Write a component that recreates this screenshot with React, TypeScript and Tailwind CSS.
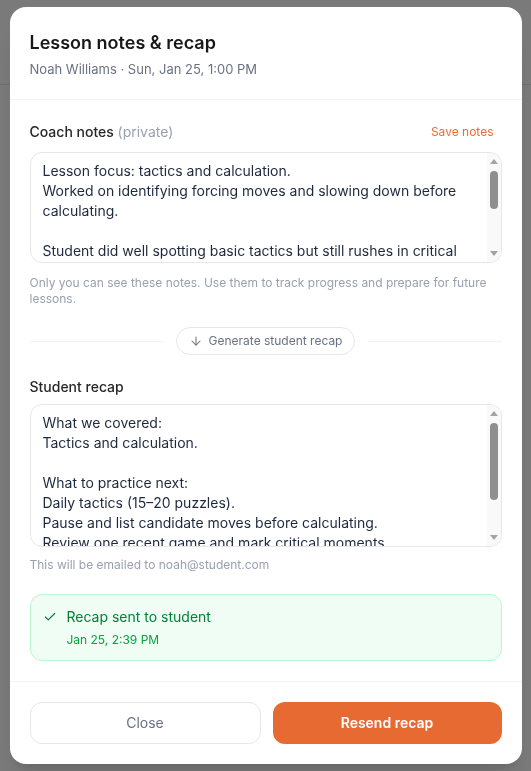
import { ArrowDown, Check } from 'lucide-react'

const coachNotes = `Lesson focus: tactics and calculation.
Worked on identifying forcing moves and slowing down before calculating.

Student did well spotting basic tactics but still rushes in critical positions and misses quiet defensive moves.

Homework:
- 15–20 tactics puzzles per day
- Review one recent game
- Write down candidate moves before each calculation

Next lesson: endgame basics.`

const studentRecap = `What we covered:
Tactics and calculation.

What to practice next:
Daily tactics (15–20 puzzles).
Pause and list candidate moves before calculating.
Review one recent game and mark critical moments.

Next lesson:
Endgame basics and king activity.`

// The page behind the dialog, only its edges show through the overlay
function BackgroundPage() {
  return (
    <div className="min-h-screen bg-white">
      <div className="h-[85px] border-b border-gray-200 flex items-center justify-end px-6">
        <span className="w-2 h-2 rounded-full bg-green-500" />
      </div>
      <div className="px-4 pt-[65px] flex flex-col gap-2">
        {[0, 1, 2, 3, 4, 5].map((i) => (
          <div key={i} className="h-[48px] bg-gray-100" />
        ))}
      </div>
    </div>
  )
}

// Classic scrollbar drawn over the textarea's right edge
function Scrollbar({ thumbTop, thumbHeight }: { thumbTop: number; thumbHeight: number }) {
  return (
    <div className="absolute top-px bottom-px right-px w-[14px] bg-[#f9f9f9] rounded-r-xl">
      <svg className="absolute left-[3px] top-[6px]" width="8" height="5" viewBox="0 0 8 5">
        <polygon points="4,0 8,5 0,5" fill="#a3a3a3" />
      </svg>
      <div
        className="absolute left-[3px] w-[8px] rounded-full bg-[#8f8f8f]"
        style={{ top: thumbTop, height: thumbHeight }}
      />
      <svg className="absolute left-[3px] bottom-[6px]" width="8" height="5" viewBox="0 0 8 5">
        <polygon points="0,0 8,0 4,5" fill="#a3a3a3" />
      </svg>
    </div>
  )
}

export default function App() {
  return (
    <div className="relative min-h-screen" style={{ fontFamily: 'Inter, "Noto Sans", sans-serif' }}>
      <BackgroundPage />

      {/* Overlay + modal */}
      <div className="fixed inset-0 bg-black/[0.52] flex items-center justify-center">
        <div className="w-[512px] bg-white rounded-2xl shadow-xl flex flex-col">
          {/* Header */}
          <div className="px-5 pt-5 pb-5 border-b border-gray-100">
            <h2 className="mt-0.5 text-lg leading-7 font-semibold text-[#18181b]">Lesson notes &amp; recap</h2>
            <p className="mt-0.5 text-[13px] leading-5 text-gray-500">Noah Williams · Sun, Jan 25, 1:00 PM</p>
          </div>

          {/* Body */}
          <div className="px-5 pt-[22px] pb-5">
            <div className="flex items-center justify-between h-5">
              <span className="text-sm font-medium text-[#27272a]">
                Coach notes <span className="font-normal text-gray-400">(private)</span>
              </span>
              <button className="text-xs text-[#ee6c35] pr-2">Save notes</button>
            </div>
            <div className="relative mt-2.5">
              <textarea
                readOnly
                value={coachNotes}
                className="block w-full h-[111px] resize-none rounded-xl border border-gray-200 px-3 py-2 text-sm leading-5 text-slate-800 outline-none"
              />
              <Scrollbar thumbTop={18} thumbHeight={38} />
            </div>
            <p className="mt-3 text-xs leading-4 text-gray-400">
              Only you can see these notes. Use them to track progress and prepare for future lessons.
            </p>

            {/* Divider with generate button */}
            <div className="mt-5 flex items-center gap-3">
              <div className="flex-1 h-px bg-gray-100" />
              <button className="h-7 flex items-center gap-1.5 px-3 rounded-full border border-gray-200 text-xs text-gray-500">
                <ArrowDown className="w-3.5 h-3.5" strokeWidth={1.75} />
                Generate student recap
              </button>
              <div className="flex-1 h-px bg-gray-100" />
            </div>

            <div className="mt-5 pt-0.5 h-5 text-sm font-medium text-[#27272a]">Student recap</div>
            <div className="relative mt-[9px]">
              <textarea
                readOnly
                value={studentRecap}
                className="block w-full h-[143px] resize-none rounded-xl border border-gray-200 px-3 py-2 text-sm leading-5 text-slate-800 outline-none"
              />
              <Scrollbar thumbTop={18} thumbHeight={77} />
            </div>
            <p className="mt-2.5 text-xs leading-4 text-gray-400">This will be emailed to noah@student.com</p>

            {/* Sent status */}
            <div className="mt-[21px] rounded-xl border border-green-200 bg-[#effdf4] pl-3 pr-4 py-3 flex gap-2.5">
              <Check className="w-3.5 h-3.5 mt-[3px] text-green-700 shrink-0" strokeWidth={2} />
              <div>
                <div className="text-sm leading-5 text-green-700">Recap sent to student</div>
                <div className="mt-[5px] text-xs leading-4 text-green-600">Jan 25, 2:39 PM</div>
              </div>
            </div>
          </div>

          {/* Footer */}
          <div className="px-5 py-5 border-t border-gray-100 flex gap-3">
            <button className="flex-1 h-[42px] rounded-xl border border-gray-200 text-sm text-gray-500">Close</button>
            <button className="flex-1 h-[42px] rounded-xl bg-[#e86a33] text-sm font-semibold text-white">
              Resend recap
            </button>
          </div>
        </div>
      </div>
    </div>
  )
}
